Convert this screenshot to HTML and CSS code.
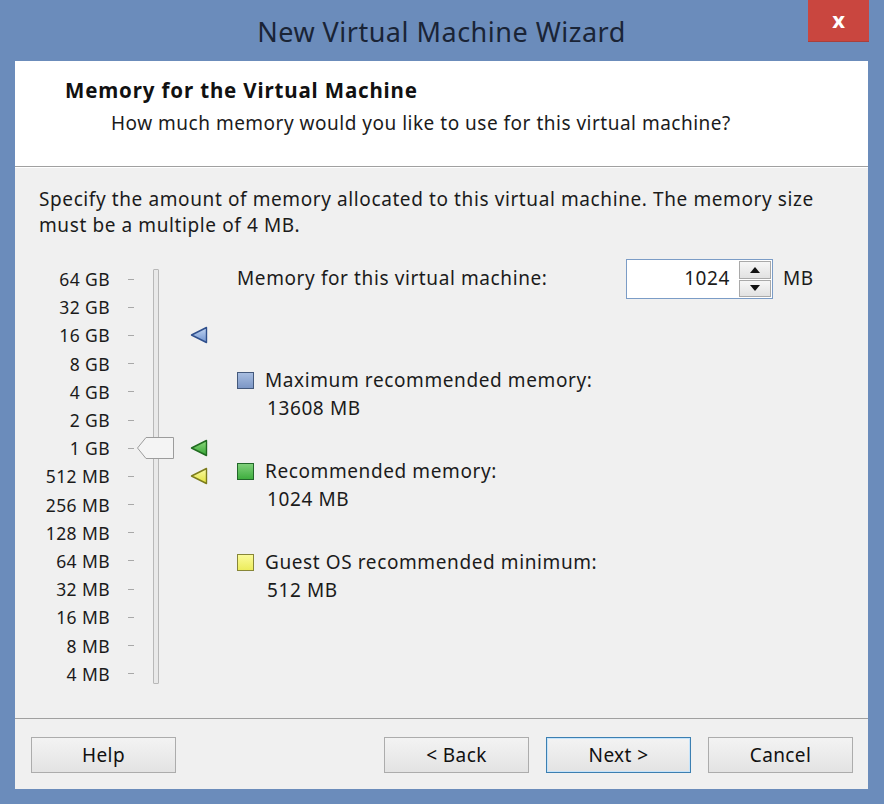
FILE: index.html
```html
<!DOCTYPE html>
<html lang="en">
<head>
    <meta charset="UTF-8">
    <title>New Virtual Machine Wizard</title>
    <link rel="stylesheet" href="styles.css">
</head>
<body>
<div class="window">
    <div class="titlebar">
        <span></span>
        <div class="title">New Virtual Machine Wizard</div>
        <button class="close">x</button>
    </div>
    <div class="client">
        <div class="header">
            <div class="heading">Memory for the Virtual Machine</div>
            <div class="subheading">How much memory would you like to use for this virtual machine?</div>
        </div>
        <div class="content">
            <p class="intro">Specify the amount of memory allocated to this virtual machine. The memory size<br>must be a multiple of 4 MB.</p>
            <div class="main">
                <div class="scale">
                    <div class="label r1">64 GB</div><div class="tick r1"></div>
                    <div class="label r2">32 GB</div><div class="tick r2"></div>
                    <div class="label r3">16 GB</div><div class="tick r3"></div>
                    <div class="label r4">8 GB</div><div class="tick r4"></div>
                    <div class="label r5">4 GB</div><div class="tick r5"></div>
                    <div class="label r6">2 GB</div><div class="tick r6"></div>
                    <div class="label r7">1 GB</div><div class="tick r7"></div>
                    <div class="label r8">512 MB</div><div class="tick r8"></div>
                    <div class="label r9">256 MB</div><div class="tick r9"></div>
                    <div class="label r10">128 MB</div><div class="tick r10"></div>
                    <div class="label r11">64 MB</div><div class="tick r11"></div>
                    <div class="label r12">32 MB</div><div class="tick r12"></div>
                    <div class="label r13">16 MB</div><div class="tick r13"></div>
                    <div class="label r14">8 MB</div><div class="tick r14"></div>
                    <div class="label r15">4 MB</div><div class="tick r15"></div>

                    <div class="track"></div>
                    <svg class="thumb r7" width="37" height="22" viewBox="0 0 37 22">
                        <path d="M0.5 11 L9 0.5 H36.5 V21.5 H9 Z" fill="#f4f4f4" stroke="#9c9c9c"/>
                    </svg>

                    <svg class="marker r3" width="18" height="18" viewBox="0 0 18 18">
                        <defs>
                            <linearGradient id="gb" x1="0" y1="0" x2="0" y2="1">
                                <stop offset="0" stop-color="#c3d6f2"/>
                                <stop offset="1" stop-color="#6f93cf"/>
                            </linearGradient>
                        </defs>
                        <path d="M1.5 9 L16.5 1.5 V16.5 Z" fill="url(#gb)" stroke="#2f4f8c" stroke-width="1.4" stroke-linejoin="round"/>
                    </svg>
                    <svg class="marker r7" width="18" height="18" viewBox="0 0 18 18">
                        <defs>
                            <linearGradient id="gg" x1="0" y1="0" x2="0" y2="1">
                                <stop offset="0" stop-color="#8fdc7e"/>
                                <stop offset="1" stop-color="#33a133"/>
                            </linearGradient>
                        </defs>
                        <path d="M1.5 9 L16.5 1.5 V16.5 Z" fill="url(#gg)" stroke="#1f6b1f" stroke-width="1.4" stroke-linejoin="round"/>
                    </svg>
                    <svg class="marker r8" width="18" height="18" viewBox="0 0 18 18">
                        <defs>
                            <linearGradient id="gy" x1="0" y1="0" x2="0" y2="1">
                                <stop offset="0" stop-color="#fbfba8"/>
                                <stop offset="1" stop-color="#e2e23a"/>
                            </linearGradient>
                        </defs>
                        <path d="M1.5 9 L16.5 1.5 V16.5 Z" fill="url(#gy)" stroke="#7c7c1c" stroke-width="1.4" stroke-linejoin="round"/>
                    </svg>
                </div>

                <div class="info">
                    <div class="memory-row">
                        <div class="memory-label">Memory for this virtual machine:</div>
                        <div class="spinbox">
                            <div class="spin-value">1024</div>
                            <div class="spin-buttons">
                                <div class="spin-btn"><span class="arrow-up"></span></div>
                                <div class="spin-btn"><span class="arrow-down"></span></div>
                            </div>
                        </div>
                        <div class="unit">MB</div>
                    </div>

                    <div class="legend legend-max">
                        <span class="swatch blue"></span>
                        <div class="legend-label">Maximum recommended memory:</div>
                        <div class="legend-value">13608 MB</div>
                    </div>
                    <div class="legend legend-rec">
                        <span class="swatch green"></span>
                        <div class="legend-label">Recommended memory:</div>
                        <div class="legend-value">1024 MB</div>
                    </div>
                    <div class="legend legend-min">
                        <span class="swatch yellow"></span>
                        <div class="legend-label">Guest OS recommended minimum:</div>
                        <div class="legend-value">512 MB</div>
                    </div>
                </div>
            </div>
        </div>
        <div class="footer">
            <button class="btn">Help</button>
            <button class="btn btn-back">&lt; Back</button>
            <button class="btn btn-default">Next &gt;</button>
            <button class="btn">Cancel</button>
        </div>
    </div>
</div>
</body>
</html>
```

FILE: styles.css
```css
* {
    box-sizing: border-box;
}
body {
    margin: 0;
    background: #6b8cbb;
    font-family: "Noto Sans", "Open Sans", sans-serif;
    color: #1b1b1b;
}
.window {
    width: 884px;
    height: 804px;
    background: #6b8cbb;
    padding: 0 16px 15px 15px;
}
.titlebar {
    height: 61px;
    display: grid;
    grid-template-columns: 1fr auto 1fr;
}
.title {
    align-self: center;
    font-size: 27px;
    letter-spacing: 0.5px;
    color: #1a2436;
    padding-top: 1px;
}
.close {
    justify-self: end;
    align-self: start;
    width: 61px;
    height: 42px;
    margin-right: -1px;
    border: 0;
    background: #c9463f;
    border-bottom: 1px solid #a8403c;
    color: #fff;
    font-family: "Noto Sans", sans-serif;
    font-size: 22px;
    font-weight: bold;
    padding: 0 0 4px 0;
}
.client {
    height: 728px;
    display: flex;
    flex-direction: column;
    background: #f0f0f0;
    letter-spacing: 0.6px;
}
.header {
    height: 106px;
    flex-shrink: 0;
    background: #fff;
    border-bottom: 1px solid #a0a0a0;
    box-shadow: 0 1px 0 #fff;
    padding: 15px 0 0 50px;
}
.heading {
    font-weight: bold;
    font-size: 20.5px;
    letter-spacing: 0.85px;
    line-height: 28px;
    color: #111;
}
.subheading {
    font-size: 19px;
    line-height: 30px;
    margin-top: 4px;
    padding-left: 46px;
    letter-spacing: 0.5px;
}
.content {
    flex: 1;
    padding: 19px 0 0 24px;
    font-size: 19px;
}
.intro {
    margin: 0;
    line-height: 26px;
}
.main {
    display: flex;
    margin-top: 21px;
}
.scale {
    display: grid;
    grid-template-columns: 71px 27px 38px 40px;
    grid-template-rows: repeat(15, 28.2px);
    padding-top: 6px;
}
.label {
    grid-column: 1;
    text-align: right;
    align-self: center;
    line-height: 24px;
    font-size: 17.5px;
    letter-spacing: 0.4px;
}
.tick {
    grid-column: 2;
    align-self: center;
    justify-self: start;
    margin-left: 18px;
    width: 6px;
    height: 1px;
    background: #a8a8a8;
}
.track {
    grid-column: 3;
    grid-row: 1 / 16;
    justify-self: center;
    width: 6px;
    margin: 4px 0 4px 0;
    background: #e9e9e9;
    border: 1px solid #b8b8b8;
    border-radius: 1px;
}
.thumb {
    grid-column: 3;
    justify-self: start;
    align-self: center;
}
.marker {
    grid-column: 4;
    justify-self: start;
    align-self: center;
    margin-left: 15px;
}
.r1 { grid-row: 1; }
.r2 { grid-row: 2; }
.r3 { grid-row: 3; }
.r4 { grid-row: 4; }
.r5 { grid-row: 5; }
.r6 { grid-row: 6; }
.r7 { grid-row: 7; }
.r8 { grid-row: 8; }
.r9 { grid-row: 9; }
.r10 { grid-row: 10; }
.r11 { grid-row: 11; }
.r12 { grid-row: 12; }
.r13 { grid-row: 13; }
.r14 { grid-row: 14; }
.r15 { grid-row: 15; }
.info {
    margin-left: 22px;
}
.memory-row {
    display: flex;
    align-items: center;
    height: 40px;
}
.memory-label {
    width: 389px;
    padding-bottom: 3px;
}
.spinbox {
    width: 147px;
    height: 40px;
    display: flex;
    background: #fff;
    border: 1px solid #7b9cc6;
    padding: 1px;
}
.spin-value {
    flex: 1;
    text-align: right;
    padding-right: 9px;
    line-height: 34px;
}
.spin-buttons {
    width: 32px;
    display: flex;
    flex-direction: column;
    gap: 1px;
}
.spin-btn {
    flex: 1;
    display: flex;
    align-items: center;
    justify-content: center;
    background: linear-gradient(#f6f6f6, #e2e2e2);
    border: 1px solid #a9a9a9;
}
.arrow-up {
    width: 0;
    height: 0;
    border-left: 5px solid transparent;
    border-right: 5px solid transparent;
    border-bottom: 6px solid #111;
}
.arrow-down {
    width: 0;
    height: 0;
    border-left: 5px solid transparent;
    border-right: 5px solid transparent;
    border-top: 6px solid #111;
}
.unit {
    margin-left: 10px;
    padding-bottom: 3px;
}
.legend {
    display: grid;
    grid-template-columns: 17px auto;
    column-gap: 11px;
    line-height: 28px;
}
.legend-max {
    margin-top: 67px;
}
.legend-rec {
    margin-top: 35px;
}
.legend-min {
    margin-top: 35px;
}
.swatch {
    align-self: center;
    width: 17px;
    height: 17px;
    border: 1.5px solid #555;
}
.swatch.blue {
    border-color: #44597c;
    background: linear-gradient(#a8bde0, #7c97c6);
}
.swatch.green {
    border-color: #22672a;
    background: linear-gradient(#7fd07a, #3fae3f);
}
.swatch.yellow {
    border-color: #878638;
    background: linear-gradient(#fbfb9a, #ecec5c);
}
.legend-label {
    grid-column: 2;
}
.legend-value {
    grid-column: 2;
    padding-left: 2px;
}
.footer {
    height: 71px;
    flex-shrink: 0;
    border-top: 1px solid #a0a0a0;
    display: flex;
    align-items: flex-start;
    gap: 17px;
    padding: 18px 15px 0 16px;
}
.btn {
    width: 145px;
    height: 36px;
    font-family: "Noto Sans", "Open Sans", sans-serif;
    font-size: 19px;
    letter-spacing: 0.4px;
    color: #111;
    background: linear-gradient(#f3f3f3, #e3e3e3);
    border: 1px solid #acacac;
    padding: 0;
}
.btn-back {
    margin-left: auto;
}
.btn-default {
    border: 1px solid #3c7fb1;
    box-shadow: inset 0 0 0 1px #c6e4fb;
}
```
